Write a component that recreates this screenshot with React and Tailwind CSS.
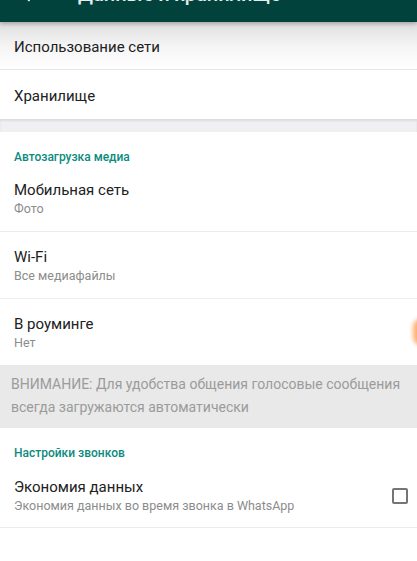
import { ArrowLeft } from "lucide-react";

const Row = ({ title, sub, right }) => (
    <div className="flex items-center border-b border-[#ececec] pl-[14px] pr-[9px] pt-[15px] pb-[14px]">
        <div className="flex-1">
            <div className="text-[15px] leading-[20px] text-[#212121]">{title}</div>
            <div className="text-[12.5px] leading-[17px] text-[#8c8c8c]">{sub}</div>
        </div>
        {right}
    </div>
);

const SectionTitle = ({ children, top }) => (
    <div className={`px-[14px] ${top} text-[12px] leading-[16px] font-medium text-[#0b8b7e]`}>
        {children}
    </div>
);

export default function App() {
    return (
        <div
            className="relative w-[417px] h-[561px] overflow-hidden bg-white"
            style={{ fontFamily: "Roboto, 'Noto Sans', sans-serif" }}
        >
            <div className="relative z-10 h-[22px] overflow-hidden bg-[#02423c] shadow-[0_2px_4px_rgba(0,0,0,0.25)]">
                <div className="mt-[-21px] flex h-[30px] items-center gap-[38px] pl-[18px] text-white/90">
                    <ArrowLeft size={22} strokeWidth={2} />
                    <span className="text-[20px] font-medium">Данные и хранилище</span>
                </div>
            </div>

            <div className="flex h-[48px] items-center border-b border-[#e6e6e6] bg-gradient-to-b from-[#dedede] via-[#f4f4f4] to-white px-[14px] pt-[3px] text-[15px] text-[#212121]">
                Использование сети
            </div>
            <div className="flex h-[49px] items-center px-[14px] pt-[3px] text-[15px] text-[#212121]">
                Хранилище
            </div>
            <div className="h-[13px] border-t border-[#dcdcdc] bg-[#f0eff1] shadow-[inset_0_1px_2px_rgba(0,0,0,0.08)]" />

            <SectionTitle top="pt-[17px]">Автозагрузка медиа</SectionTitle>
            <Row title="Мобильная сеть" sub="Фото" />
            <Row title="Wi-Fi" sub="Все медиафайлы" />
            <div className="pl-[14px] pt-[15px] pb-[14px]">
                <div className="text-[15px] leading-[20px] text-[#212121]">В роуминге</div>
                <div className="text-[12.5px] leading-[17px] text-[#8c8c8c]">Нет</div>
            </div>

            <div className="bg-[#e9e9e9] px-[11px] pt-[8px] pb-[9px] text-[14px] leading-[23px] text-[#9b9b9b]">
                ВНИМАНИЕ: Для удобства общения голосовые сообщения всегда загружаются автоматически
            </div>

            <SectionTitle top="pt-[17px]">Настройки звонков</SectionTitle>
            <div className="flex items-center border-b border-[#ececec] pl-[14px] pr-[9px] pt-[16px] pb-[13px]">
                <div className="flex-1">
                    <div className="text-[15px] leading-[20px] text-[#212121]">Экономия данных</div>
                    <div className="text-[12.5px] leading-[17px] text-[#8c8c8c]">
                        Экономия данных во время звонка в WhatsApp
                    </div>
                </div>
                <div className="h-[16px] w-[16px] rounded-[2px] border-2 border-[#757575]" />
            </div>

            <div className="absolute right-[-14px] top-[318px] h-[28px] w-[18px] rounded-full bg-[#ffb070] blur-[2px]" />
        </div>
    );
}
